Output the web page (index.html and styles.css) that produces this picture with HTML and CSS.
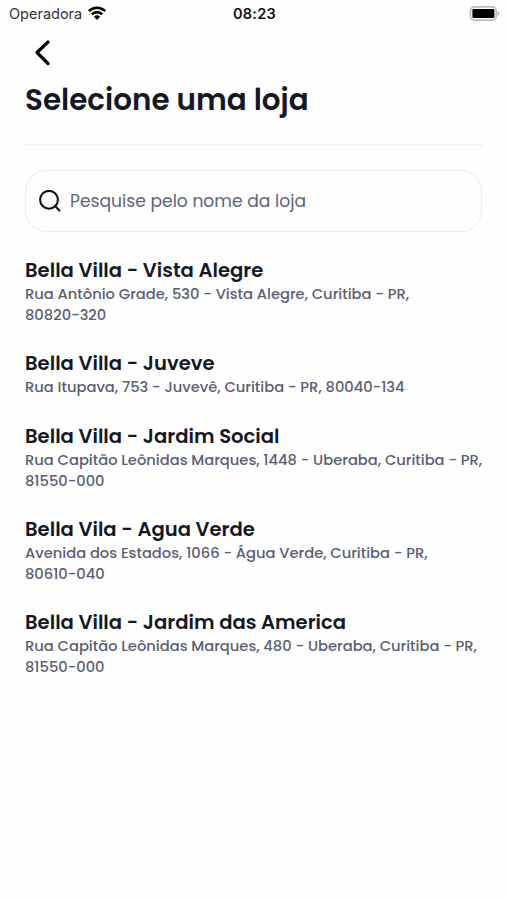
FILE: index.html
```html
<!DOCTYPE html>
<html lang="pt-BR">
<head>
<meta charset="utf-8">
<title>Selecione uma loja</title>
<link rel="stylesheet" href="styles.css">
</head>
<body>
<header class="status">
  <div class="carrier"><span class="operator">Operadora</span>
    <svg class="wifi" viewBox="0 0 18 14" width="18" height="14" fill="none" stroke="#000" stroke-width="2.5"><path d="M.9 5.2a11.5 11.5 0 0 1 16.2 0M3.8 8.3a7.4 7.4 0 0 1 10.4 0"/><path d="M9 13.9 5.9 10.7a4.5 4.5 0 0 1 6.2 0z" fill="#000" stroke="none"/></svg>
  </div>
  <time class="clock">08:23</time>
  <svg class="battery" viewBox="0 0 31 15" width="31" height="15"><rect x="1.4" y=".9" width="25.8" height="13.2" rx="4" fill="#fff" stroke="#bdbdbd" stroke-width="1.7"/><rect x="3.4" y="3" width="22" height="9" rx="1.2"/><path d="M28.5 5v5c2.4-.9 2.4-4.1 0-5z" fill="#b5b5b5"/></svg>
</header>
<main class="page">
  <a class="back" aria-label="Voltar"><svg viewBox="0 0 18 28" width="18" height="28" fill="none" stroke="#000" stroke-width="3.2" stroke-linecap="round" stroke-linejoin="round"><path d="M15 3 4 13.5l11 11"/></svg></a>
  <h1 class="title">Selecione uma loja</h1>
  <div class="search">
    <svg viewBox="0 0 22 22" width="22" height="22" fill="none" stroke="#111" stroke-width="2.1" stroke-linecap="round"><circle cx="10" cy="9.8" r="8.9"/><path d="m16.3 16.3 4.2 4.2"/></svg>
    <span class="placeholder">Pesquise pelo nome da loja</span>
  </div>
  <ul class="stores">
    <li class="store"><h2 class="name">Bella Villa - Vista Alegre</h2><p class="address">Rua Antônio Grade, 530 - Vista Alegre, Curitiba - PR,<br>80820-320</p></li>
    <li class="store"><h2 class="name">Bella Villa - Juveve</h2><p class="address">Rua Itupava, 753 - Juvevê, Curitiba - PR, 80040-134</p></li>
    <li class="store"><h2 class="name">Bella Villa - Jardim Social</h2><p class="address">Rua Capitão Leônidas Marques, 1448 - Uberaba, Curitiba - PR,<br>81550-000</p></li>
    <li class="store"><h2 class="name">Bella Vila - Agua Verde</h2><p class="address">Avenida dos Estados, 1066 - Água Verde, Curitiba - PR,<br>80610-040</p></li>
    <li class="store"><h2 class="name">Bella Villa - Jardim das America</h2><p class="address">Rua Capitão Leônidas Marques, 480 - Uberaba, Curitiba - PR,<br>81550-000</p></li>
  </ul>
</main>
</body>
</html>
```
FILE: styles.css
```css
* { box-sizing: border-box; margin: 0; padding: 0; }
body { width: 507px; height: 900px; background: #fefefe; overflow: hidden; font-family: Poppins, Inter, "Liberation Sans", sans-serif; color: #151824; }
svg { display: block; flex: none; }
.status { height: 28px; padding: 0 7px 2px 9px; display: grid; grid-template-columns: 1fr auto 1fr; align-items: center; font-family: Inter, "Liberation Sans", sans-serif; }
.carrier { display: flex; align-items: center; gap: 6px; font-size: 14.5px; color: #333; }
.wifi { margin-top: -1px; }
.clock { font-size: 14.5px; font-weight: 600; color: #111; letter-spacing: .3px; }
.battery { justify-self: end; }
.page { padding: 0 25px; }
.back { display: block; height: 50px; padding: 11px 0 0 8px; }
.title { height: 68px; line-height: 44px; font-size: 29.4px; font-weight: 600; border-bottom: 2px solid #f0f0f8; white-space: nowrap; }
.search { margin-top: 24px; height: 62px; border: 1.5px solid #ebedef; border-radius: 21px; padding: 0 13px; display: flex; align-items: center; gap: 9px; }
.placeholder { font-size: 17.15px; color: #60657a; white-space: nowrap; }
.stores { list-style: none; margin-top: 24.4px; display: flex; flex-direction: column; gap: 24.1px; }
.name { height: 28px; line-height: 28px; font-size: 19.6px; font-weight: 600; white-space: nowrap; }
.address { font-size: 14.7px; line-height: 20.5px; font-weight: 500; color: #5a5f74; white-space: nowrap; }
```
